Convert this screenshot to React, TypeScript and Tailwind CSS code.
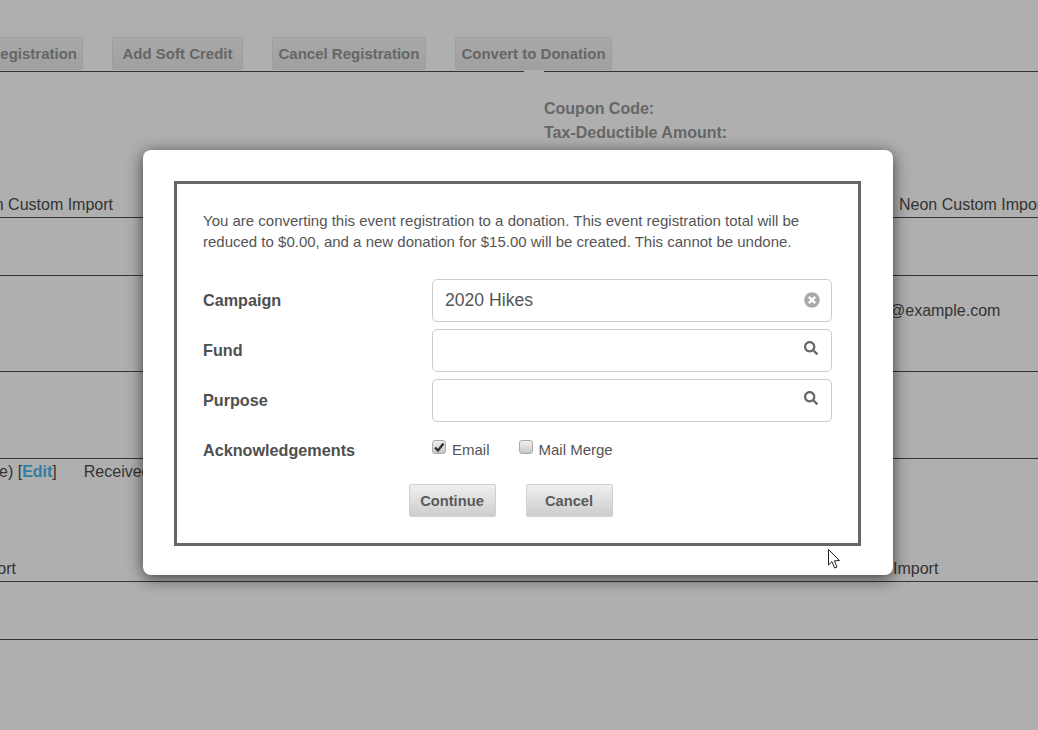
import { FaSearch, FaTimesCircle } from 'react-icons/fa';

const topButtons = [
  { label: 'Edit Registration', cls: 'px-[5px]' },
  { label: 'Add Soft Credit', cls: 'px-[9.5px]' },
  { label: 'Cancel Registration', cls: 'px-[5.5px]' },
  { label: 'Convert to Donation', cls: 'px-[5.5px]' },
];

function FieldRow({ label, value, clearable }: { label: string; value?: string; clearable?: boolean }) {
  return (
    <div className="flex items-center h-[43px]">
      <div className="w-[229px] text-[16.2px] font-bold text-[#4f4f4f]">{label}</div>
      <div className="flex-1 h-full flex items-center justify-between pl-[12px] pr-[11px] rounded-[5px] border border-[#cccccc] bg-white text-[17.6px] text-[#555555]">
        <span>{value}</span>
        {clearable ? (
          <FaTimesCircle className="text-[#aaaaaa] text-[16px] -mt-[2px]" />
        ) : (
          <FaSearch className="text-[#666666] text-[14px] -mt-[5px] mr-[2px]" />
        )}
      </div>
    </div>
  );
}

function Check({ label, checked }: { label: string; checked?: boolean }) {
  return (
    <div className="flex items-center pt-[1px] text-[15px] text-[#555555]">
      <span className="w-[14px] h-[14px] -mt-[8px] mr-[6px] rounded-[3px] border border-[#aaaaaa] bg-gradient-to-b from-[#f0f0f0] to-[#c8c8c8] flex items-center justify-center">
        {checked && (
          <svg viewBox="0 0 12 12" className="w-[12px] h-[12px]">
            <path d="M2 6.5 L5 9.5 L10.5 2.5" fill="none" stroke="#333333" strokeWidth="2.4" />
          </svg>
        )}
      </span>
      {label}
    </div>
  );
}

function ModalButton({ label }: { label: string }) {
  return (
    <button className="w-[87px] h-[33px] pt-[1px] rounded-[2px] border border-[#d0d0d0] bg-gradient-to-b from-[#efefef] to-[#cdcdcd] text-[14.7px] font-bold text-[#5a5a5a]">
      {label}
    </button>
  );
}

export default function App() {
  return (
    <div className="relative w-[1038px] h-[730px] overflow-hidden bg-[#afafaf] font-['Liberation_Sans',Arial,sans-serif] text-[16px] text-[#333333]">
      {/* page behind the overlay */}
      <div className="flex h-[72px]">
        <div className="w-[524px] shrink-0 border-b border-[#333333] pt-[37px]">
          <div className="flex gap-[29px] -ml-[49px] w-[800px]">
            {topButtons.map((b) => (
              <div
                key={b.label}
                className={`h-[33px] ${b.cls} pt-[1px] flex items-center rounded-[2px] border border-[#9e9e9e] bg-gradient-to-b from-[#a9a9a9] to-[#a0a0a0] text-[15px] font-bold text-[#666666] whitespace-nowrap`}
              >
                {b.label}
              </div>
            ))}
          </div>
        </div>
        <div className="flex-1 ml-[20px] border-b border-[#333333]" />
      </div>

      <div className="flex h-[146px] border-b border-[#333333]">
        <div className="w-[544px] shrink-0 pt-[121px]">
          <div className="w-[113px] flex justify-end whitespace-nowrap">Neon Custom Import</div>
        </div>
        <div className="pt-[25px] leading-[24px] whitespace-nowrap">
          <div className="text-[#666666] font-bold">Coupon Code:</div>
          <div className="text-[#666666] font-bold">Tax-Deductible Amount:</div>
          <div className="mt-[48px] ml-[355px]">Neon Custom Import</div>
        </div>
      </div>

      <div className="h-[58px] border-b border-[#333333]" />
      <div className="h-[96px] border-b border-[#333333] pt-[23px] pl-[889px] whitespace-nowrap">@example.com</div>
      <div className="h-[87px] border-b border-[#333333]" />

      <div className="h-[123px] border-b border-[#333333] pt-[1px] whitespace-nowrap">
        <div className="-ml-[1px]">
          e) [<b className="text-[#2f7ea3]">Edit</b>]<span className="ml-[27px]">Received</span>
        </div>
        <div className="flex mt-[73px]">
          <div className="w-[16px] flex justify-end">Custom Import</div>
          <div className="ml-[877px]">Import</div>
        </div>
      </div>
      <div className="h-[58px] border-b border-[#333333]" />

      {/* modal */}
      <div className="absolute left-[143px] top-[150px] w-[750px] h-[425px] rounded-[8px] bg-white p-[31px] shadow-[0_3px_16px_rgba(0,0,0,0.65)]">
        <div className="w-[687px] h-[365px] border-[3px] border-[#666666] pt-[26px] pl-[26px] pr-[26px]">
          <p className="text-[15px] leading-[21px] text-[#555555] w-[610px]">
            You are converting this event registration to a donation. This event registration total will be reduced to $0.00, and a new donation for $15.00 will be created. This cannot be undone.
          </p>
          <div className="mt-[27px] flex flex-col gap-[7px]">
            <FieldRow label="Campaign" value="2020 Hikes" clearable />
            <FieldRow label="Fund" />
            <FieldRow label="Purpose" />
          </div>
          <div className="flex items-center mt-[16px] h-[24px]">
            <div className="w-[229px] text-[16.2px] font-bold text-[#4f4f4f]">Acknowledgements</div>
            <div className="flex gap-[29px]">
              <Check label="Email" checked />
              <Check label="Mail Merge" />
            </div>
          </div>
          <div className="flex justify-center gap-[30px] mt-[22px] pr-[14px]">
            <ModalButton label="Continue" />
            <ModalButton label="Cancel" />
          </div>
        </div>
      </div>

      {/* mouse pointer */}
      <svg viewBox="0 0 13 21" className="absolute left-[828px] top-[549px] w-[13px] h-[21px]">
        <path d="M0.5 0.5 L0.5 16 L4 12.6 L6.6 19 L9 18 L6.4 11.8 L11.5 11.5 Z" fill="#ffffff" stroke="#222222" strokeWidth="1" />
      </svg>
    </div>
  );
}
